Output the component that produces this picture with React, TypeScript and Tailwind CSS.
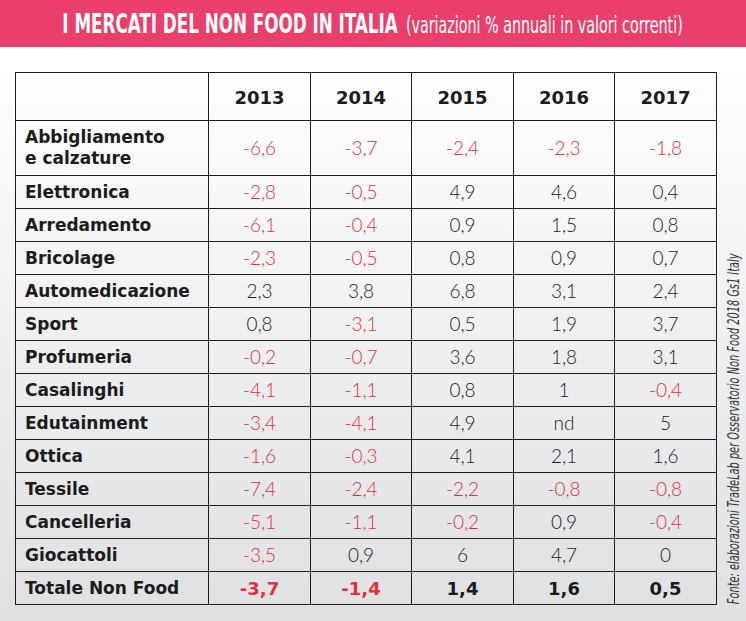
import React, { FC } from 'react';

type Row = { label: string[]; values: string[]; total?: boolean };

const years = ['2013', '2014', '2015', '2016', '2017'];

const rows: Row[] = [
  { label: ['Abbigliamento', 'e calzature'], values: ['-6,6', '-3,7', '-2,4', '-2,3', '-1,8'] },
  { label: ['Elettronica'], values: ['-2,8', '-0,5', '4,9', '4,6', '0,4'] },
  { label: ['Arredamento'], values: ['-6,1', '-0,4', '0,9', '1,5', '0,8'] },
  { label: ['Bricolage'], values: ['-2,3', '-0,5', '0,8', '0,9', '0,7'] },
  { label: ['Automedicazione'], values: ['2,3', '3,8', '6,8', '3,1', '2,4'] },
  { label: ['Sport'], values: ['0,8', '-3,1', '0,5', '1,9', '3,7'] },
  { label: ['Profumeria'], values: ['-0,2', '-0,7', '3,6', '1,8', '3,1'] },
  { label: ['Casalinghi'], values: ['-4,1', '-1,1', '0,8', '1', '-0,4'] },
  { label: ['Edutainment'], values: ['-3,4', '-4,1', '4,9', 'nd', '5'] },
  { label: ['Ottica'], values: ['-1,6', '-0,3', '4,1', '2,1', '1,6'] },
  { label: ['Tessile'], values: ['-7,4', '-2,4', '-2,2', '-0,8', '-0,8'] },
  { label: ['Cancelleria'], values: ['-5,1', '-1,1', '-0,2', '0,9', '-0,4'] },
  { label: ['Giocattoli'], values: ['-3,5', '0,9', '6', '4,7', '0'] },
  { label: ['Totale Non Food'], values: ['-3,7', '-1,4', '1,4', '1,6', '0,5'], total: true }
];

const colWidths = ['w-[193px]', 'w-[102px]', 'w-[101px]', 'w-[102px]', 'w-[101px]', 'w-[102px]'];

const App: FC = () => {
  return (
    <div className="w-[746px] h-[621px] overflow-hidden bg-linear-to-b from-white from-10% to-[#dfe0e2] font-['Lato',sans-serif] text-[#1c1c1c]">
      <div className="h-[47px] bg-[#ea3f6c] flex items-center justify-center text-white">
        <div className="scale-x-[0.69] whitespace-nowrap font-['DejaVu_Sans_Condensed',sans-serif] leading-none">
          <span className="text-[27px] font-bold">I MERCATI DEL NON FOOD IN ITALIA</span>
          <span className="text-[23px] ml-3">(variazioni % annuali in valori correnti)</span>
        </div>
      </div>

      <div className="flex items-end pl-[15px] pt-[25px]">
        <table className="border-collapse table-fixed w-[701px] shrink-0">
          <colgroup>
            {colWidths.map((w, i) => (
              <col key={i} className={w} />
            ))}
          </colgroup>
          <thead>
            <tr className="h-[48px]">
              <th className="border-[1.5px] border-[#1c1c1c]" />
              {years.map((y) => (
                <th
                  key={y}
                  className="border-[1.5px] border-[#1c1c1c] text-[18px] font-bold font-['DejaVu_Sans',sans-serif] pt-[2px]">
                  {y}
                </th>
              ))}
            </tr>
          </thead>
          <tbody>
            {rows.map((row) => (
              <tr key={row.label[0]} className={row.label.length > 1 ? 'h-[55px]' : 'h-[33px]'}>
                <td className="border-[1.5px] border-[#1c1c1c] pl-[9px] text-[17px] font-bold font-['DejaVu_Sans',sans-serif] leading-[21px]">
                  {row.label.map((l) => (
                    <div key={l}>{l}</div>
                  ))}
                </td>
                {row.values.map((v, i) => (
                  <td
                    key={i}
                    className={`border-[1.5px] border-[#1c1c1c] text-center ${
                      row.total
                        ? "font-bold text-[18px] font-['DejaVu_Sans',sans-serif]"
                        : 'font-light text-[19px]'
                    } ${v.startsWith('-') ? 'text-[#e0323c]' : 'text-[#1c1c1c]'}`}>
                    {v}
                  </td>
                ))}
              </tr>
            ))}
          </tbody>
        </table>
        <div className="ml-[6px] mb-[1px] w-[22px] h-[350px] flex items-center justify-center">
          <div className="[writing-mode:vertical-rl] rotate-180 whitespace-nowrap italic font-light text-[16px] leading-none text-[#333] font-['DejaVu_Sans_Condensed',sans-serif] scale-y-[0.68]">
            Fonte: elaborazioni TradeLab per Osservatorio Non Food 2018 Gs1 Italy
          </div>
        </div>
      </div>
    </div>
  );
};

export default App;
